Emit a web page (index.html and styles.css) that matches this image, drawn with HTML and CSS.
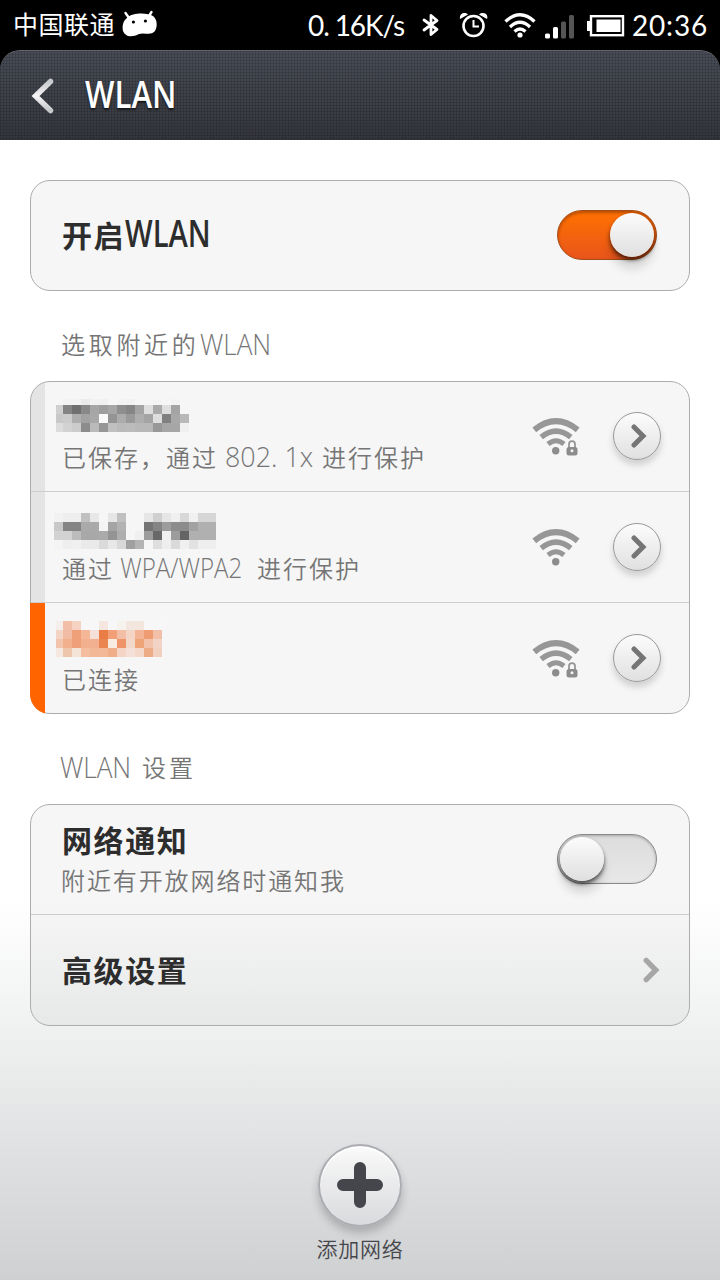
FILE: index.html
```html
<!DOCTYPE html>
<html lang="zh-CN">
<head>
<meta charset="utf-8">
<title>WLAN</title>
<link rel="stylesheet" href="styles.css">
</head>
<body>
<svg class="defs" width="0" height="0">
  <defs>
    <linearGradient id="backFill" x1="0" y1="0" x2="0" y2="1"><stop offset="0" stop-color="#c8c9cc"/><stop offset=".5" stop-color="#f4f4f5"/><stop offset="1" stop-color="#c6c7ca"/></linearGradient>
    <symbol id="wifi" viewBox="0 0 48 37">
      <g fill="none" stroke="#979797">
        <path stroke-width="6" d="M2.3 11.8Q24-5.5 45.7 11.8"/>
        <path stroke-width="5.5" d="M9.2 19.2Q24 7.2 38.8 19.2"/>
        <path stroke-width="5" d="M16 26Q24 19.5 32 26"/>
      </g>
      <circle cx="23.7" cy="32.8" r="3.7" fill="#8c8c8c"/>
    </symbol>
    <symbol id="lock" viewBox="0 0 12 16">
      <path d="M3 8V4.2a3 3 0 0 1 6 0V8" fill="none" stroke="#969696" stroke-width="1.8"/>
      <rect x=".5" y="7" width="11" height="8.5" rx="2.500" fill="#8c8c8c"/>
      <circle cx="6" cy="10.8" r="1.5" fill="#f4f4f4"/>
    </symbol>
    <symbol id="chevron" viewBox="0 0 16 24"><path d="M3 3 12 12 3 21" fill="none" stroke="currentColor" stroke-width="5" stroke-linecap="round"/></symbol>
  </defs>
</svg>

<header class="top">
  <div class="status">
    <span class="carrier">中国联通</span>
    <svg class="android" width="36" height="28" viewBox="0 0 36 28"><path d="M7 8 3.500 3M27 6 29.500 2" stroke="#fff" stroke-width="2.4" stroke-linecap="round"/><path d="M5 8C11 2 26 3 31 6 35 9 36 16 33 21 29 26 22 22 17 24 11 27 4 28 1 21 0 16 1 11 5 8Z" fill="#fff"/><circle cx="11.4" cy="12" r="1.6"/><circle cx="23.4" cy="11" r="1.6"/></svg>
    <span class="speed">0. 16K/s</span>
    <svg class="bt" width="18" height="26" viewBox="0 0 18 26"><path d="M2 8 15 17.5 9 22.500V3.500L15 8.500 2 18" fill="none" stroke="#fff" stroke-width="2.8" stroke-linejoin="round" stroke-linecap="round"/></svg>
    <svg class="alarm" width="30" height="26" viewBox="0 0 30 26"><g fill="none" stroke="#fff"><circle cx="14.5" cy="14" r="10" stroke-width="2.6"/><path d="M14.5 8V14.5H20" stroke-width="2"/></g><path d="M1 7C0 2 5-1 9 2.5ZM20 2.500C24-1 30 2 28 7Z" fill="#fff"/></svg>
    <svg class="swifi" width="32" height="25" viewBox="0 0 32 25"><g fill="none" stroke="#fff" stroke-width="3.3"><path d="M1.5 8.500Q16-4.8 30.5 8.500"/><path d="M6 14Q16 4.5 26 14"/><path d="M10.5 18.500Q16 13.500 21.5 18.500"/></g><circle cx="16" cy="22" r="2.6" fill="#fff"/></svg>
    <svg class="signal" width="30" height="24" viewBox="0 0 30 24"><rect y="18.500" width="5" height="5" rx="1.500" fill="#fff"/><rect x="8" y="12" width="5" height="11.500" rx="1.500" fill="#fff"/><rect x="16" y="6.500" width="5" height="17" rx="1.500" fill="#555"/><rect x="24" width="5" height="23.500" rx="1.500" fill="#555"/></svg>
    <svg class="battery" width="38" height="22" viewBox="0 0 38 22"><rect x="4" y="1.200" width="32" height="19" fill="none" stroke="#fff" stroke-width="2.400"/><path d="M0 6h3v10H0zM9.500 4.500h24v12.500h-24z" fill="#fff"/></svg>
    <span class="time">20:36</span>
  </div>
  <div class="titlebar">
    <svg width="24" height="38" viewBox="0 0 24 38"><path d="M19.500 4.500 4.500 19 19.500 33.500" fill="none" stroke="url(#backFill)" stroke-width="5.500" stroke-linecap="round"/></svg>
    <h1 class="latin">WLAN</h1>
  </div>
</header>

<main>
  <section class="card">
    <div class="row enable">
      <div class="name">开启<span class="latin">WLAN</span></div>
      <div class="switch on"><i class="knob"></i></div>
    </div>
  </section>

  <h2 class="wide">选取附近的<span class="latin">WLAN</span></h2>

  <section class="card networks">
    <div class="row first">
      <div class="info"><svg class="ssid" id="ssid-1" width="162" height="36"></svg>
        <p>已保存，通过<span class="latin digits"> 802. 1x </span>进行保护</p></div>
      <div class="wifi"><svg width="48" height="37"><use href="#wifi"/></svg><svg class="lock" width="12" height="16"><use href="#lock"/></svg></div>
      <div class="round"><svg width="16" height="24"><use href="#chevron"/></svg></div>
    </div>
    <div class="row second">
      <div class="info"><svg class="ssid" id="ssid-2" width="162" height="36"></svg>
        <p>通过<span class="latin wpa"> WPA/WPA2 </span>进行保护</p></div>
      <div class="wifi"><svg width="48" height="37"><use href="#wifi"/></svg></div>
      <div class="round"><svg width="16" height="24"><use href="#chevron"/></svg></div>
    </div>
    <div class="row active">
      <div class="info"><svg class="ssid" id="ssid-3" width="162" height="36"></svg>
        <p>已连接</p></div>
      <div class="wifi"><svg width="48" height="37"><use href="#wifi"/></svg><svg class="lock" width="12" height="16"><use href="#lock"/></svg></div>
      <div class="round"><svg width="16" height="24"><use href="#chevron"/></svg></div>
    </div>
  </section>

  <h2 class="settings-title"><span class="latin">WLAN</span>设置</h2>

  <section class="card settings">
    <div class="row">
      <div class="info"><div class="name">网络通知</div><p>附近有开放网络时通知我</p></div>
      <div class="switch"><i class="knob"></i></div>
    </div>
    <div class="row">
      <div class="name">高级设置</div>
      <svg class="more" width="17" height="26" viewBox="0 0 16 24"><use href="#chevron"/></svg>
    </div>
  </section>
</main>

<footer>
  <div class="add"><svg width="46" height="46" viewBox="0 0 46 46"><path d="M23 6V40M6 23H40" stroke="#45464b" stroke-width="12" stroke-linecap="round"/></svg></div>
  <span>添加网络</span>
</footer>
<script src="mosaic.js"></script>
</body>
</html>
```
FILE: styles.css
```css
* { box-sizing: border-box; margin: 0; padding: 0; }
body {
  width: 720px; height: 1280px; overflow: hidden;
  display: flex; flex-direction: column;
  font-family: "Noto Sans CJK SC", sans-serif; font-weight: 350;
  color: #757575;
  background: linear-gradient(#fff 0, #fff 900px, #f0f2f1 1025px, #e1e2e3 1140px, #cfd0d2 1280px);
}
svg { display: block; flex: none; }
.defs { position: absolute; }
/* Condensed Latin: the box has the condensed width, the glyphs are scaled into it. */
.latin { display: inline-block; font-family: "Open Sans", sans-serif; font-weight: 350; white-space: pre; transform-origin: 0 50%; }

.top { background: #000; height: 140px; color: #fff; }
.status { height: 50px; padding-left: 13px; display: flex; align-items: center; white-space: pre; }
.carrier { font-size: 25px; letter-spacing: .5px; width: 109px; font-weight: 400; line-height: 46px; padding-bottom: 4px; }
.android { margin-top: -3px; }
.speed, .time { font-family: Lato, sans-serif; font-size: 28px; font-weight: 400; line-height: 50px; }
.speed { margin-left: 150px; width: 113px; letter-spacing: -1.1px; }
.bt { margin-left: 1px; }
.alarm { margin-left: 19px; }
.swifi { margin-left: 15px; }
.signal { margin-left: 9px; margin-top: 3px; }
.battery { margin-left: 12px; margin-top: 2px; }
.time { margin-left: 7px; letter-spacing: .8px; }

.titlebar {
  height: 90px; border-radius: 20px 20px 0 0; padding-left: 31px;
  display: flex; align-items: center; gap: 30px;
  border-top: 1px solid #62656c;
  background:
    repeating-linear-gradient(90deg, rgba(0,0,0,.13) 0 1px, transparent 1px 3px),
    repeating-linear-gradient(rgba(0,0,0,.13) 0 1px, transparent 1px 3px),
    linear-gradient(#484c56, #34363c);
}
h1.latin { font-size: 38px; line-height: 82px; height: 88px; font-weight: 600; transform: scaleX(.82); text-shadow: 0 2px 2px #17181b; }

main { padding: 40px 30px 0; }
.card { border: 1px solid #adadad; border-radius: 20px; background: rgba(0,0,0,.035); }
.row { height: 111px; display: flex; align-items: center; padding-left: 31px; padding-right: 32px; }
.row + .row { border-top: 1px solid #cdcdcd; }
.row p { font-size: 24px; line-height: 34px; height: 34px; letter-spacing: 2px; white-space: nowrap; }
.info, .name { flex: 1; }
.name { color: #2d2d2d; font-size: 30px; line-height: 42px; padding-bottom: 3px; letter-spacing: 1.600px; font-weight: 700; white-space: nowrap; }
.enable { height: 109px; }
.enable .name { height: 48px; }
.enable .latin { font-size: 37px; line-height: 42px; width: 86px; letter-spacing: 0; font-weight: 600; transform: scaleX(.79); }
h2 { font-size: 24px; font-weight: 350; padding-left: 31px; display: flex; align-items: center; height: 90px; padding-top: 15px; }
h2 .latin { font-size: 29px; letter-spacing: 0; transform: scaleX(.9); }
h2.wide { letter-spacing: 3.7px; }
h2.settings-title { letter-spacing: 3px; }
.settings-title .latin { width: 82px; margin-left: -1px; }

.networks .row { padding-right: 28px; background: linear-gradient(90deg, rgba(0,0,0,.075) 14px, transparent 14px); }
.networks .first { height: 109px; border-radius: 19px 0 0 0; }
.networks .second { height: 112px; border-bottom: 1px solid #cdcdcd; }
.networks .active {
  height: 111px; margin-left: -1px; margin-bottom: -1px; padding-left: 32px; padding-bottom: 1px;
  border-top: 0; border-radius: 0 0 0 20px;
  background: linear-gradient(90deg, #ff6400 15px, transparent 15px);
}
.networks .info { align-self: flex-start; }
.ssid { margin-left: -8px; }
.first .ssid { margin-top: 14px; }
.second .ssid { margin-top: 21px; }
.active .ssid { margin-top: 18px; }
.first p { margin-top: 8px; }
.second p { margin-top: 2px; }
.active p { margin-top: 5px; }
.digits, .wpa { font-size: 28px; line-height: 20px; letter-spacing: 0; }
.digits { width: 104px; transform: scaleX(.96); }
.wpa { width: 143px; transform: scaleX(.86); }
.wifi { width: 48px; height: 37px; margin-right: 33px; position: relative; }
.lock { position: absolute; left: 34px; top: 22px; }
.first .round { margin-top: -1px; }
.round {
  width: 48px; height: 48px; border: 1px solid #999; border-radius: 50%; color: #757575;
  display: flex; align-items: center; justify-content: center; padding-left: 4px;
  background: linear-gradient(#fcfcfc, #e0e0e0); box-shadow: 0 5px 7px rgba(0,0,0,.16);
}

.switch {
  width: 100px; height: 50px; border-radius: 25px; padding: 3px; display: flex; margin-top: -2px;
  border: 1px solid #8b8987; background: linear-gradient(#dcdcdc, #e8e8e8);
  box-shadow: inset 0 1px 3px rgba(0,0,0,.25);
}
.switch.on { justify-content: flex-end; border-color: #a64e18; background: linear-gradient(#ff7200, #e8551c); box-shadow: inset 0 2px 3px rgba(100,30,0,.45); }
.knob { width: 44px; height: 44px; margin-top: -1px; margin-left: -1px; border-radius: 50%; background: linear-gradient(#fcfcfc, #dfdfdf); box-shadow: 0 3px 4px rgba(0,0,0,.65), 0 12px 10px rgba(0,0,0,.13); }
.on .knob { margin-right: -1px; }
.settings .row:first-child { height: 109px; }
.settings .info .name { margin-top: -4px; }
.settings .info p { margin-left: -1px; letter-spacing: 1.9px; }
.more { color: #a6a6a6; margin-right: -3px; }

footer { margin-top: 118px; display: flex; flex-direction: column; align-items: center; color: #45464b; }
.add {
  width: 84px; height: 83px; border-radius: 50%; border: 2px solid #abadb2;
  display: flex; align-items: center; justify-content: center; padding-bottom: 1px;
  background: linear-gradient(#fafafa, #d9dadd); box-shadow: inset 0 2px 1px #fff, 0 6px 9px rgba(0,0,0,.2);
}
footer span { font-size: 21px; letter-spacing: .8px; line-height: 30px; margin-top: 6px; }
```
FILE: mosaic.js
```js
// Censored network names: columns are 9px wide, rows 9px tall.
const names = {
  'ssid-1': { x: 2, first: 7, y: 3, rows: [
    'f6 f3 f3 ea f2 f0 f6 f3 f2 f6 f6 f4 f6 f3 f6',
    'd0 84 70 88 a6 9e a6 8e 86 a4 de aa de a4 f6',
    'c8 cc ae a2 a8 fa 94 ac 9a ae a4 de 80 a8 b8',
    'dc d2 cc 8c ba 96 c0 ba bc b8 b8 98 a6 a6 f0'] },
  'ssid-2': { x: 0, first: 9, y: 0, rows: [
    'f2 ee ee c0 e8 f6 e6 c0 f6 f6 e6 d0 e6 f0 d8 f0 d6 d6',
    'c8 84 84 aa aa f4 a4 b2 f6 f6 74 84 9c 8c 8c a2 b0 b0',
    'd2 d2 bc a8 a8 aa 94 ae f6 f0 9c 68 f0 9c 64 b0 b0 b0',
    'f4 ee f0 ea ea da e8 d8 a0 b4 f6 de ee da f0 e2 ee ee'] },
  'ssid-3': { x: 2, first: 7, y: 0, rows: [
    'f6eeea f2bea8 f6d2c2 f7 f7 f5e6e0 f7 f6f2ee f2e6de f2e6de f7 f7',
    'f4d4c4 f2bca4 efa078 f4b898 f4e0d8 ea7c46 f29e76 f2bea6 f4d4c4 f2b494 f09c72 f2c0a8',
    'f2c4ac f2b08c efa07a f2b08e f2b090 ea8450 f8ece2 ee9468 f2d8c8 efa478 f2c2aa f2d4c6',
    'f4e8e0 eec6ac f4e4d8 f4be9e f2b896 f2b898 f0ae88 f4d4c4 f4e0d8 f4d8ca eeac86 f2d0c0'] }
};
for (const [id, m] of Object.entries(names)) {
  const svg = document.getElementById(id);
  m.rows.forEach((row, r) => row.split(' ').forEach((c, i) => {
    const rect = document.createElementNS('http://www.w3.org/2000/svg', 'rect');
    const top = r === 0 ? m.y : r * 9;
    rect.setAttribute('x', i === 0 ? m.x : i * 9);
    rect.setAttribute('y', top);
    rect.setAttribute('width', i === 0 ? m.first : 9);
    rect.setAttribute('height', r * 9 + 9 - top);
    rect.setAttribute('fill', '#' + (c.length === 2 ? c + c + c : c));
    svg.appendChild(rect);
  }));
}
```
